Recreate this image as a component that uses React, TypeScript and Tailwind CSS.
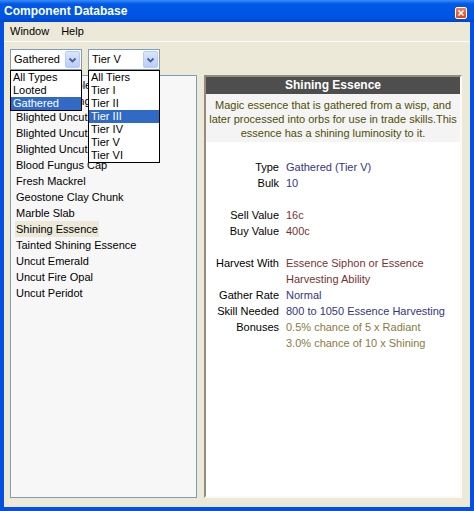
import React from 'react';

const listItems = [
  'Abyssal Marble',
  'Arcane Shining Dust',
  'Blighted Uncut Emerald',
  'Blighted Uncut Fire Opal',
  'Blighted Uncut Peridot',
  'Blood Fungus Cap',
  'Fresh Mackrel',
  'Geostone Clay Chunk',
  'Marble Slab',
  'Shining Essence',
  'Tainted Shining Essence',
  'Uncut Emerald',
  'Uncut Fire Opal',
  'Uncut Peridot',
];

const typeOptions = ['All Types', 'Looted', 'Gathered'];
const tierOptions = ['All Tiers', 'Tier I', 'Tier II', 'Tier III', 'Tier IV', 'Tier V', 'Tier VI'];

const Chevron: React.FC = () => (
  <svg width="9" height="6" viewBox="0 0 9 6">
    <path d="M1.5 1.5 L4.5 4.5 L7.5 1.5" fill="none" stroke="#4d6185" strokeWidth="1.8" />
  </svg>
);

interface ComboProps {
  value: string;
  options: string[];
  selected: string;
}

const Combo: React.FC<ComboProps> = ({ value, options, selected }) => (
  <div className="relative w-[72px] h-[21px]">
    <div className="flex items-center justify-between h-full border border-[#7f9db9] bg-white pl-[3px] pr-[1px]">
      <span className="leading-[19px]">{value}</span>
      <div className="flex items-center justify-center w-[15px] h-[17px] rounded-[2px] border border-[#b8cbf4] bg-[linear-gradient(to_bottom,#dae5fd,#b8cdfa)]">
        <Chevron />
      </div>
    </div>
    <div className="absolute left-0 top-[21px] z-10 w-[72px] border border-black bg-white">
      {options.map((o) => (
        <div
          key={o}
          className={
            'h-[13px] leading-[13px] pl-[2px] ' +
            (o === selected ? 'bg-[#316ac5] text-white' : 'text-black')
          }
        >
          {o}
        </div>
      ))}
    </div>
  </div>
);

const details: { label: string; value: React.ReactNode; color: string }[] = [
  { label: 'Type', value: 'Gathered (Tier V)', color: 'text-[#35357f]' },
  { label: 'Bulk', value: '10', color: 'text-[#35357f]' },
  { label: '', value: '', color: '' },
  { label: 'Sell Value', value: '16c', color: 'text-[#7a3232]' },
  { label: 'Buy Value', value: '400c', color: 'text-[#7a3232]' },
  { label: '', value: '', color: '' },
  {
    label: 'Harvest With',
    value: (
      <>
        Essence Siphon or Essence
        <br />
        Harvesting Ability
      </>
    ),
    color: 'text-[#7a3232]',
  },
  { label: 'Gather Rate', value: 'Normal', color: 'text-[#35357f]' },
  { label: 'Skill Needed', value: '800 to 1050 Essence Harvesting', color: 'text-[#35357f]' },
  {
    label: 'Bonuses',
    value: (
      <>
        0.5% chance of 5 x Radiant
        <br />
        3.0% chance of 10 x Shining
      </>
    ),
    color: 'text-[#8a7a3c]',
  },
];

const App: React.FC = () => {
  return (
    <div className="w-[474px] h-[511px] flex flex-col overflow-hidden font-['Liberation_Sans',Arial,sans-serif] text-[11px] text-black">
      {/* title bar */}
      <div className="relative h-[22px] shrink-0 bg-[linear-gradient(to_bottom,#3b8cf5,#0058e6_18%,#0054e3_80%,#0046c6)]">
        <span className="absolute left-[4px] top-[4px] text-[12px] leading-[14px] font-bold text-white">
          Component Database
        </span>
        <div className="absolute left-[455px] top-[7px] w-[12px] h-[12px] rounded-[2px] border border-white bg-[linear-gradient(to_bottom,#e8805e,#d9481f)] flex items-center justify-center">
          <svg width="8" height="8" viewBox="0 0 8 8">
            <path d="M1.5 1.5 L6.5 6.5 M6.5 1.5 L1.5 6.5" stroke="white" strokeWidth="1.6" />
          </svg>
        </div>
      </div>

      {/* window body */}
      <div className="flex-1 flex flex-col bg-[#ece9d8] border-x-4 border-b-4 border-[#0450e0]">
        <div className="h-[20px] flex items-center gap-[12px] pl-[6px] border-b border-white">
          <span>Window</span>
          <span>Help</span>
        </div>

        <div className="flex gap-[6px] pl-[6px] mt-[7px]">
          <Combo value="Gathered" options={typeOptions} selected="Gathered" />
          <Combo value="Tier V" options={tierOptions} selected="Tier III" />
        </div>

        <div className="flex mt-[5px] pl-[6px] h-[423px]">
          {/* item list */}
          <div className="w-[187px] h-full border border-[#7f9db9] bg-[#f7f7f7] pt-[1px] overflow-hidden">
            {listItems.map((item) => (
              <div key={item} className="h-[16px] pl-[4px] whitespace-nowrap">
                <span
                  className={
                    'inline-block h-[16px] leading-[16px] px-[1px] ' +
                    (item === 'Shining Essence' ? 'bg-[#ece9d8]' : '')
                  }
                >
                  {item}
                </span>
              </div>
            ))}
          </div>

          {/* detail panel */}
          <div className="ml-[7px] w-[258px] h-full border-2 border-t-[#928e7e] border-l-[#928e7e] border-r-[#fbfaf4] border-b-[#fbfaf4] bg-white flex flex-col">
            <div className="h-[17px] leading-[17px] bg-[#4e4e4e] text-white font-bold text-[12px] text-center">
              Shining Essence
            </div>
            <div className="bg-[#f4f4f4] text-[#4f4f05] text-center leading-[14px] pt-[4px] pb-[2px]">
              Magic essence that is gathered from a wisp, and
              <br />
              later processed into orbs for use in trade skills.This
              <br />
              essence has a shining luminosity to it.
            </div>
            <div className="grid grid-cols-[73px_1fr] gap-x-[7px] mt-[17px] leading-[16px]">
              {details.map((d, i) => (
                <React.Fragment key={i}>
                  <div className="text-right min-h-[16px]">{d.label}</div>
                  <div className={d.color + ' min-h-[16px]'}>{d.value}</div>
                </React.Fragment>
              ))}
            </div>
          </div>
        </div>
      </div>
    </div>
  );
};

export default App;
